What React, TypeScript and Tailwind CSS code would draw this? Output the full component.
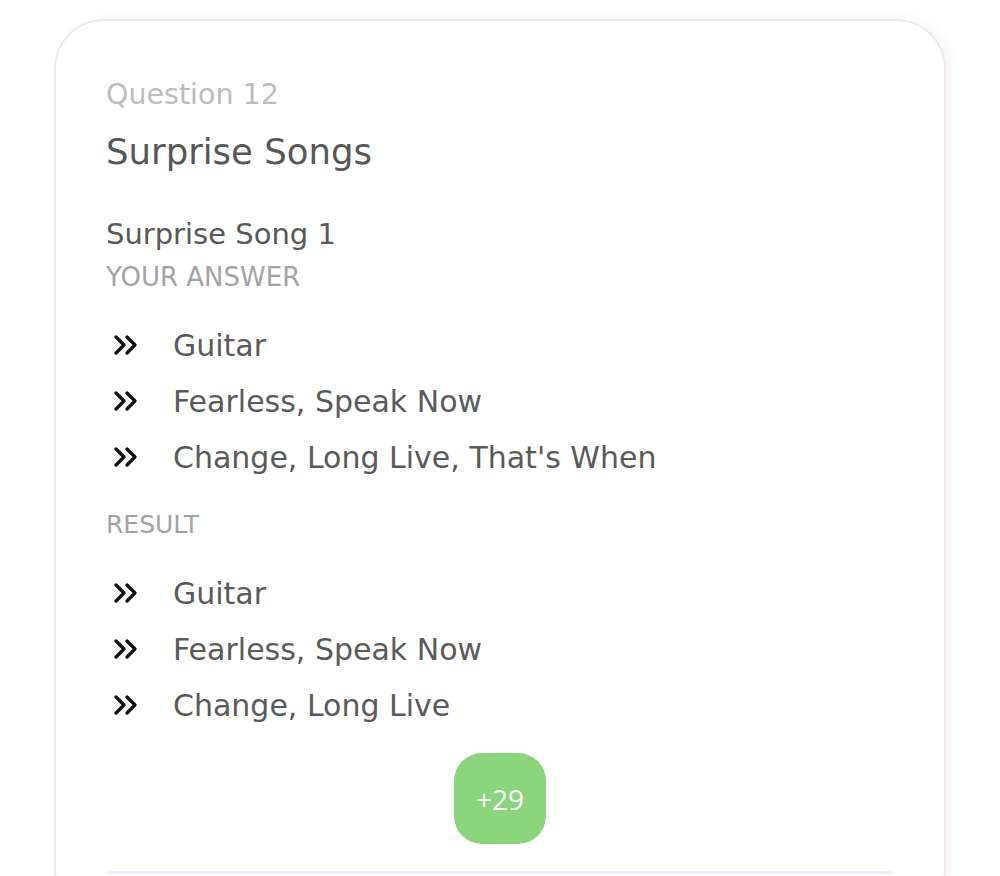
const answers = ['Guitar', 'Fearless, Speak Now', "Change, Long Live, That's When"];
const results = ['Guitar', 'Fearless, Speak Now', 'Change, Long Live'];

function Chevrons() {
  return (
    <svg width="26" height="22" viewBox="0 0 26 22" fill="none" stroke="#111" strokeWidth="3.4" strokeLinecap="round" strokeLinejoin="round">
      <path d="M3 3l8 8-8 8" />
      <path d="M14 3l8 8-8 8" />
    </svg>
  );
}

function ItemList({ items }: { items: string[] }) {
  return (
    <ul className="flex flex-col">
      {items.map((item, i) => (
        <li key={i} className="flex h-[56px] items-center">
          <span className="flex w-[67px] shrink-0 pl-[7px]">
            <Chevrons />
          </span>
          <span className="text-[30px] text-[#5a5a5a]">{item}</span>
        </li>
      ))}
    </ul>
  );
}

export default function App() {
  return (
    <div className="min-h-[876px] overflow-hidden bg-white px-[54px] pt-[19px]" style={{ fontFamily: '"DejaVu Sans", sans-serif' }}>
      <div className="h-[900px] rounded-[50px] border-2 border-[#f3e6ec] bg-white px-[50px] pt-[55px] shadow-[6px_0_16px_rgba(0,0,0,0.04)]">
        <p className="text-[28.5px] leading-[38px] text-[#bcbcbc]">Question 12</p>
        <h1 className="mt-[16px] text-[35.5px] leading-[44px] text-[#575757]">Surprise Songs</h1>

        <h2 className="mt-[41px] text-[29px] leading-[38px] text-[#585858]">Surprise Song 1</h2>
        <p className="mt-[7px] text-[26px] leading-[34px] text-[#a3a3a3]">YOUR ANSWER</p>

        <div className="mt-[23px]">
          <ItemList items={answers} />
        </div>

        <p className="mt-[23px] text-[25px] leading-[34px] text-[#a3a3a3]">RESULT</p>

        <div className="mt-[23px]">
          <ItemList items={results} />
        </div>

        <div className="mt-[20px] flex justify-center">
          <div className="flex h-[91px] w-[92px] items-center justify-center rounded-[28px] bg-[#8ad47c] text-[28px] text-white" style={{ fontFamily: '"Open Sans", sans-serif' }}>
            +29
          </div>
        </div>

        <div className="mt-[27px] h-[3px] bg-[#efeffa]" />
      </div>
    </div>
  );
}
